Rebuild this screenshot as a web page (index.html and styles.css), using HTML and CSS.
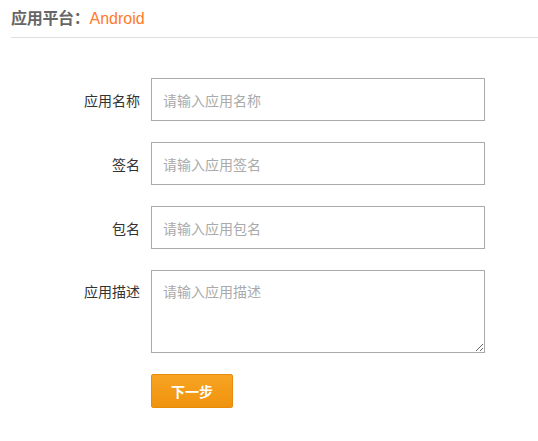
FILE: index.html
```html
<!DOCTYPE html>
<html>
<head>
<meta charset="utf-8">
<link rel="stylesheet" href="styles.css">
</head>
<body>
<div class="page">
  <div class="header">
    <span class="h-label">应用平台：</span><span class="h-value">Android</span>
  </div>
  <form class="form">
    <div class="row">
      <label class="label">应用名称</label>
      <input class="field" type="text" placeholder="请输入应用名称">
    </div>
    <div class="row">
      <label class="label">签名</label>
      <input class="field" type="text" placeholder="请输入应用签名">
    </div>
    <div class="row">
      <label class="label">包名</label>
      <input class="field" type="text" placeholder="请输入应用包名">
    </div>
    <div class="row row-top">
      <label class="label label-top">应用描述</label>
      <textarea class="field area" placeholder="请输入应用描述"></textarea>
    </div>
    <div class="row">
      <span class="label"></span>
      <button class="btn" type="button">下一步</button>
    </div>
  </form>
</div>
</body>
</html>
```
FILE: styles.css
```css
* { box-sizing: border-box; }
html, body { margin: 0; padding: 0; background: #fff; }
body {
  font-family: "Microsoft YaHei", "Noto Sans CJK SC", "Liberation Sans", sans-serif;
  color: #333;
}
.page { padding: 0 0 0 11px; }
.header {
  height: 38px;
  padding-top: 6px;
  border-bottom: 1px solid #dedede;
  font-size: 16px;
  line-height: 22px;
}
.h-label { color: #666; font-weight: bold; letter-spacing: -0.3px; }
.h-value { color: #ff7a2a; font-family: "Liberation Sans", "Noto Sans CJK SC", sans-serif; }
.form {
  display: flex;
  flex-direction: column;
  gap: 21px;
  padding-top: 40px;
}
.row { display: flex; align-items: center; gap: 11px; }
.row-top { align-items: flex-start; }
.label {
  width: 129px;
  text-align: right;
  font-size: 14px;
  color: #333;
}
.label-top { padding-top: 11px; }
.field {
  width: 334px;
  height: 43px;
  border: 1px solid #aaa;
  border-radius: 0;
  padding: 0 11px;
  font-size: 14px;
  font-family: "Noto Sans CJK SC", sans-serif;
  color: #333;
  outline: none;
  margin: 0;
}
.field::placeholder { color: #aaa; }
.area {
  height: 83px;
  padding: 10px 11px;
  resize: both;
  display: block;
}
.btn {
  width: 82px;
  height: 34px;
  border: 1px solid #e88b0c;
  border-radius: 2px;
  background: linear-gradient(#f8a422, #ef930f);
  color: #fff;
  font-size: 14px;
  font-weight: bold;
  font-family: "Noto Sans CJK SC", sans-serif;
  padding: 0;
  margin: 0;
}
```
